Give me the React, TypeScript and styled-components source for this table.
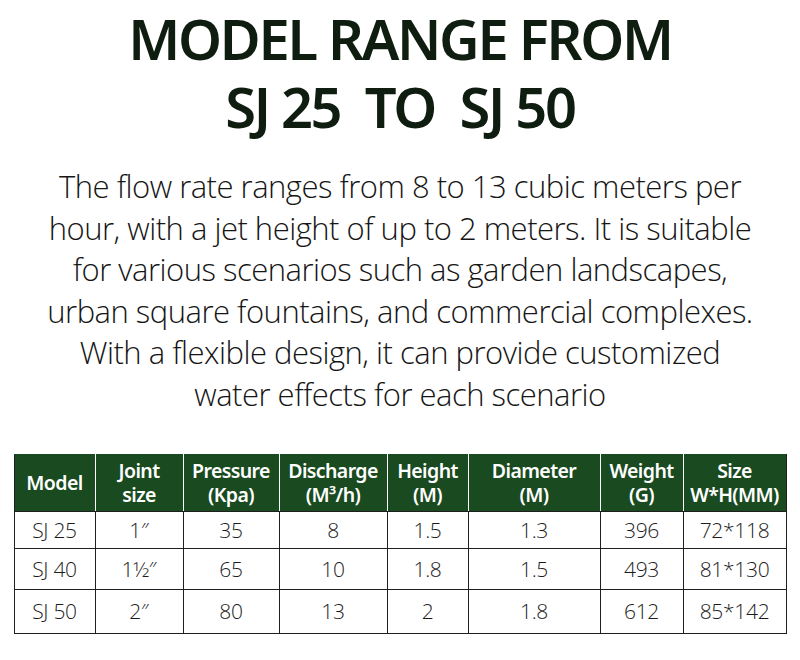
import React from "react";
import styled, { createGlobalStyle } from "styled-components";

const Global = createGlobalStyle`
  html, body { margin: 0; padding: 0; background: #ffffff; }
  body { width: 800px; height: 660px; overflow: hidden; }
`;

const Page = styled.div`
  width: 800px;
  height: 660px;
  display: flex;
  flex-direction: column;
  align-items: center;
  background: #ffffff;
`;

const Title = styled.h1`
  margin: 0;
  padding-top: 4px;
  font-family: "Noto Sans", "Open Sans", sans-serif;
  font-weight: 600;
  font-size: 56px;
  line-height: 68px;
  letter-spacing: -2.3px;
  color: #0f1d10;
  text-align: center;
`;

const Body = styled.div`
  margin: 26px 0 0;
  display: flex;
  flex-direction: column;
  align-items: center;
  font-family: "Open Sans", "Noto Sans", sans-serif;
  font-weight: 300;
  font-size: 31px;
  line-height: 41.6px;
  letter-spacing: -0.5px;
  color: #161616;
  white-space: nowrap;
`;

const Line = styled.span`
  display: block;
`;

const Table = styled.table`
  margin: 38px 0 0;
  border-collapse: collapse;
  table-layout: fixed;
  width: 772px;
  font-family: "Noto Sans", "Open Sans", sans-serif;
`;

const HeadCell = styled.th`
  background: #1a4a1f;
  color: #ffffff;
  font-weight: 600;
  font-size: 19.5px;
  line-height: 24px;
  letter-spacing: -0.6px;
  height: 56px;
  padding: 0;
  border: 1px solid #1f1f1f;
  border-top-color: #1a4a1f;
  border-left-color: #ffffff;
  border-right-color: #ffffff;
  text-align: center;
  vertical-align: middle;
  &:first-child { border-left-color: #1f1f1f; }
  &:last-child { border-right-color: #1f1f1f; }
`;

const Row = styled.tr<{ $h: number }>`
  height: ${(p) => p.$h}px;
`;

const Cell = styled.td`
  padding: 0;
  border: 1px solid #1f1f1f;
  font-family: "Open Sans", "Noto Sans", sans-serif;
  font-weight: 300;
  font-size: 21px;
  letter-spacing: -0.3px;
  color: #1c1c1c;
  text-align: center;
  vertical-align: middle;
`;

const cols = [81, 88, 96, 108, 81, 132, 83, 103];
const heads = [
  ["Model"],
  ["Joint", "size"],
  ["Pressure", "(Kpa)"],
  ["Discharge", "(M³/h)"],
  ["Height", "(M)"],
  ["Diameter", "(M)"],
  ["Weight", "(G)"],
  ["Size", "W*H(MM)"],
];
const rows: { h: number; cells: string[] }[] = [
  { h: 37, cells: ["SJ 25", "1″", "35", "8", "1.5", "1.3", "396", "72*118"] },
  { h: 41, cells: ["SJ 40", "1½″", "65", "10", "1.8", "1.5", "493", "81*130"] },
  { h: 44, cells: ["SJ 50", "2″", "80", "13", "2", "1.8", "612", "85*142"] },
];

const lines = [
  "The flow rate ranges from 8 to 13 cubic meters per",
  "hour, with a jet height of up to 2 meters. It is suitable",
  "for various scenarios such as garden landscapes,",
  "urban square fountains, and commercial complexes.",
  "With a flexible design, it can provide customized",
  "water effects for each scenario",
];

export default function App() {
  return (
    <>
      <Global />
      <Page>
        <Title>
          MODEL RANGE FROM
          <br />
          SJ 25&nbsp; TO&nbsp; SJ 50
        </Title>
        <Body>
          {lines.map((l, i) => (
            <Line key={i}>{l}</Line>
          ))}
        </Body>
        <Table>
          <colgroup>
            {cols.map((w, i) => (
              <col key={i} style={{ width: w }} />
            ))}
          </colgroup>
          <thead>
            <tr>
              {heads.map((h, i) => (
                <HeadCell key={i}>
                  {h.map((l, j) => (
                    <React.Fragment key={j}>
                      {j > 0 && <br />}
                      {l}
                    </React.Fragment>
                  ))}
                </HeadCell>
              ))}
            </tr>
          </thead>
          <tbody>
            {rows.map((r, i) => (
              <Row key={i} $h={r.h}>
                {r.cells.map((c, j) => (
                  <Cell key={j}>{c}</Cell>
                ))}
              </Row>
            ))}
          </tbody>
        </Table>
      </Page>
    </>
  );
}
